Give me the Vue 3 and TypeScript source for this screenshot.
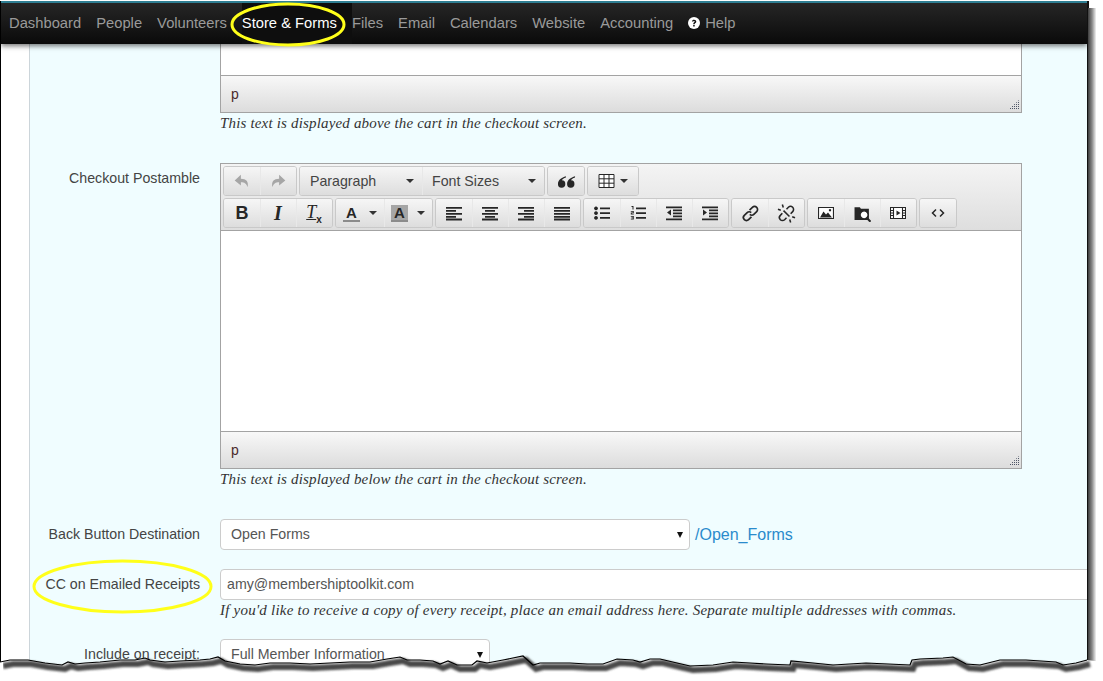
<script setup lang="ts">
interface Part { d: string; f?: string; s?: string; w?: number }
interface Btn { w?: number; icon?: string; text?: string; textClass?: string; caret?: boolean; label?: string }
type Group = Btn[]

const k = '#262626'
const lines = (spec: number[][]) => spec.map(([x, y, w]) => `M${x} ${y}h${w}v1.8H${x}z`).join('')
const icons: Record<string, Part[]> = {
  undo: [{ d: 'M7 2.500 1.500 7.500 7 12V9c3.200 0 5 1.200 6 4.500C14 8.500 11.800 6 7 6z', f: '#a6a6a6' }],
  redo: [{ d: 'M9 2.500l5.500 5L9 12V9c-3.200 0-5 1.200-6 4.500C2 8.500 4.200 6 9 6z', f: '#a6a6a6' }],
  quote: [{ d: 'M7.500 3.500C4 4.600 .8 6.600 .8 10a3.100 3.100 0 1 0 3.300-3c.4-.8 1.600-1.700 3.400-2.300zM15.200 3.500C11.700 4.600 8.500 6.600 8.500 10a3.100 3.100 0 1 0 3.300-3c.4-.8 1.600-1.700 3.400-2.300z', f: k }],
  table: [{ d: 'M.5 1.500h15v13H.5zM.5 5.800h15M.5 10.200h15M5.500 1.500v13M10.500 1.500v13', s: k, w: 1, f: '#fff' }],
  left: [{ d: lines([[0, 2, 16], [0, 5, 10], [0, 8, 16], [0, 11, 10], [0, 13.600, 16]]), f: k }],
  center: [{ d: lines([[0, 2, 16], [3, 5, 10], [0, 8, 16], [3, 11, 10], [0, 13.600, 16]]), f: k }],
  right: [{ d: lines([[0, 2, 16], [6, 5, 10], [0, 8, 16], [6, 11, 10], [0, 13.600, 16]]), f: k }],
  justify: [{ d: lines([[0, 2, 16], [0, 5, 16], [0, 8, 16], [0, 11, 16], [0, 13.600, 16]]), f: k }],
  bullist: [{ d: lines([[6, 2.500, 10], [6, 7.200, 10], [6, 12, 10]]) + 'M2 1.500a1.900 1.900 0 1 0 .01 0zM2 6.200a1.900 1.900 0 1 0 .01 0zM2 11a1.900 1.900 0 1 0 .01 0z', f: k }],
  numlist: [{ d: lines([[6, 2.500, 10], [6, 7.200, 10], [6, 12, 10]]) + 'M1.500 1h2v3.500h-1V2h-1zM.8 6h3v2h-2v.6h2v.8h-3v-2h2v-.6h-2zM.8 11h3v3.600h-3v-.8h2v-.6H1.300v-.7h1.500v-.7h-2z', f: k }],
  outdent: [{ d: lines([[0, 1.500, 16], [7, 4.500, 9], [7, 7.500, 9], [7, 10.500, 9], [0, 13.500, 16]]) + 'M5 4.500v6l-4-3z', f: k }],
  indent: [{ d: lines([[0, 1.500, 16], [7, 4.500, 9], [7, 7.500, 9], [7, 10.500, 9], [0, 13.500, 16]]) + 'M1 4.500v6l4-3z', f: k }],
  link: [{ d: 'M7.200 5.200 9.600 2.800a2.400 2.400 0 0 1 3.600 3.600L10.800 8.800a2.400 2.400 0 0 1-3.400 0M8.800 10.800 6.400 13.200a2.400 2.400 0 0 1-3.600-3.600L5.200 7.200a2.400 2.400 0 0 1 3.400 0', s: k, w: 1.400, f: 'none' }],
  unlink: [{ d: 'M8 4.400 9.600 2.800a2.400 2.400 0 0 1 3.600 3.600L11.500 8.200M8 11.600 6.400 13.200a2.400 2.400 0 0 1-3.600-3.600L4.500 7.800M5.500 5.600 10.500 10.500M4.500 .5l.8 2.400M.8 4.500l2.400.8M11.500 15.500l-.8-2.400M15.200 11.500l-2.400-.8', s: k, w: 1.300, f: 'none' }],
  image: [
    { d: 'M.5 2.500h15v11H.5z', s: k, w: 1.200, f: '#fff' },
    { d: 'M2 12.500l3.500-6 2.500 3 2-2 4 5zM12 4a1.200 1.200 0 1 0 .01 0z', f: k },
  ],
  browse: [
    { d: 'M.5 2h5l1 1.500h7.500V14H.5z', f: k },
    { d: 'M9.500 5.500a3.800 3.800 0 1 0 .01 0z', f: '#fff', s: k, w: 1.300 },
    { d: 'M12 12 15.500 15.800', s: k, w: 1.900, f: 'none' },
  ],
  media: [
    { d: 'M.5 2.500h15v11H.5zM3.500 2.500v11M12.500 2.500v11M.5 5.500h3M.5 8h3M.5 10.500h3M12.500 5.500h3M12.500 8h3M12.500 10.500h3', s: k, w: 1.100, f: '#fff' },
    { d: 'M6.500 5.500v5l4-2.500z', f: k },
  ],
  code: [{ d: 'M6 4.500 2.500 8 6 11.500M10 4.500 13.500 8 10 11.500', s: k, w: 1.500, f: 'none' }],
}

const row1: Group[] = [
  [{ icon: 'undo' }, { icon: 'redo' }],
  [{ w: 122, label: 'Paragraph', caret: true }, { w: 122, label: 'Font Sizes', caret: true }],
  [{ icon: 'quote' }],
  [{ w: 50, icon: 'table', caret: true }],
]
const row2: Group[] = [
  [{ text: 'B', textClass: 'bold' }, { text: 'I', textClass: 'ital' }, { text: 'Tx', textClass: 'clear' }],
  [{ w: 48, text: 'A', textClass: 'fore', caret: true }, { w: 48, text: 'A', textClass: 'back', caret: true }],
  [{ icon: 'left' }, { icon: 'center' }, { icon: 'right' }, { icon: 'justify' }],
  [{ icon: 'bullist' }, { icon: 'numlist' }, { icon: 'outdent' }, { icon: 'indent' }],
  [{ icon: 'link' }, { icon: 'unlink' }],
  [{ icon: 'image' }, { icon: 'browse' }, { icon: 'media' }],
  [{ icon: 'code' }],
]
const toolbar = [row1, row2]

const navItems = ['Dashboard', 'People', 'Volunteers', 'Store & Forms', 'Files', 'Email', 'Calendars', 'Website', 'Accounting']

const edge = '0,662 10,660 20,660 28,660 45,663 62,665 68,662 75,664 85,663 100,662 120,660 135,660 145,658 150,660 165,662 180,661 200,660 210,659 218,657 225,661 240,664 255,665 270,663 290,663 310,664 330,663 350,662 370,662 387,659 400,657 407,660 420,660 433,661 440,664 448,661 457,665 472,665 477,661 487,663 503,660 523,656 533,665 540,663 570,663 587,664 603,664 617,659 633,660 640,662 650,659 660,659 677,663 690,666 713,665 733,662 750,663 766,664 790,665 791,661 813,663 833,665 866,663 910,665 912,660 920,659 943,658 953,657 966,664 980,665 1000,660 1026,660 1056,662 1063,665 1076,663 1087,660'
</script>

<template>
  <div class="page">
    <div class="frame">
      <nav class="navbar">
        <a
          v-for="item in navItems"
          :key="item"
          class="nav-link"
          :class="{ active: item === 'Store & Forms' }"
        >{{ item }}</a>
        <a class="nav-link help">
          <svg class="help-icon" viewBox="0 0 12 12" width="12" height="12">
            <circle cx="6" cy="6" r="6" fill="#fff" />
            <path d="M3.900 4.600C4 3.300 5 2.700 6.100 2.700c1.300 0 2.200.8 2.200 1.900 0 1.600-1.600 1.500-1.600 2.700H5.200c0-1.900 1.500-1.800 1.500-2.700 0-.4-.3-.7-.7-.7-.5 0-.7.300-.8.700zM5.200 8h1.500v1.400H5.200z" fill="#111" />
          </svg>
          Help
        </a>
      </nav>

      <main class="panel">
        <section class="row first">
          <div class="label"></div>
          <div class="field">
            <div class="editor cut">
              <div class="edit-area short"></div>
              <div class="status"><span>p</span><i class="grip"></i></div>
            </div>
            <p class="hint">This text is displayed above the cart in the checkout screen.</p>
          </div>
        </section>

        <section class="row second">
          <label class="label lbl-top">Checkout Postamble</label>
          <div class="field">
            <div class="editor">
              <div class="tools">
                <div v-for="(row, r) in toolbar" :key="r" class="tool-row">
                  <div v-for="(group, g) in row" :key="g" class="group">
                    <button
                      v-for="(btn, b) in group"
                      :key="b"
                      type="button"
                      class="btn"
                      :class="{ wide: btn.label }"
                      :style="{ width: (btn.w ?? 36) + 'px' }"
                    >
                      <span v-if="btn.label" class="btn-label">{{ btn.label }}</span>
                      <span v-if="btn.text" :class="btn.textClass">{{ btn.text === 'Tx' ? 'T' : btn.text }}<sub v-if="btn.text === 'Tx'">x</sub></span>
                      <svg v-if="btn.icon" class="ico" :class="'i-' + btn.icon" viewBox="0 0 16 16">
                        <path
                          v-for="(p, i) in icons[btn.icon]"
                          :key="i"
                          :d="p.d"
                          :fill="p.f"
                          :stroke="p.s"
                          :stroke-width="p.w"
                          fill-rule="evenodd"
                        />
                      </svg>
                      <i v-if="btn.caret" class="caret"></i>
                    </button>
                  </div>
                </div>
              </div>
              <div class="edit-area tall"></div>
              <div class="status"><span>p</span><i class="grip"></i></div>
            </div>
            <p class="hint">This text is displayed below the cart in the checkout screen.</p>
          </div>
        </section>

        <section class="row third">
          <label class="label lift">Back Button Destination</label>
          <div class="field inline">
            <div class="select-wrap dest">
              <select class="control"><option>Open Forms</option></select>
            </div>
            <a class="path">/Open_Forms</a>
          </div>
        </section>

        <section class="row fourth">
          <label class="label">CC on Emailed Receipts</label>
          <div class="field">
            <input class="control email" value="amy@membershiptoolkit.com" />
            <p class="hint long">If you'd like to receive a copy of every receipt, place an email address here. Separate multiple addresses with commas.</p>
          </div>
        </section>

        <section class="row">
          <label class="label lift">Include on receipt:</label>
          <div class="field">
            <div class="select-wrap info">
              <select class="control"><option>Full Member Information</option></select>
            </div>
          </div>
        </section>
      </main>
    </div>

    <svg class="overlay" viewBox="0 0 1103 681" width="1103" height="681" aria-hidden="true">
      <defs>
        <filter id="soft" filterUnits="userSpaceOnUse" x="0" y="640" width="1103" height="41"><feGaussianBlur stdDeviation="1.200" /></filter>
        <linearGradient id="side" x1="0" x2="1" y1="0" y2="0">
          <stop offset="0" stop-color="#3c3c3c" />
          <stop offset="0.5" stop-color="#888" />
          <stop offset="1" stop-color="#f2f2f2" />
        </linearGradient>
      </defs>
      <rect x="1088" y="8" width="8" height="657" fill="url(#side)" />
      <polygon :points="edge + ' 1103,662 1103,681 0,681'" fill="#fff" />
      <polyline :points="edge" transform="translate(3 4)" fill="none" stroke="#484848" stroke-width="6" filter="url(#soft)" />
      <polyline :points="edge" fill="none" stroke="#000" stroke-width="1.200" />
      <ellipse cx="288" cy="24.500" rx="56" ry="20.500" fill="none" stroke="#ffff1a" stroke-width="3" />
      <ellipse cx="122.500" cy="586.500" rx="88.500" ry="25.500" fill="none" stroke="#ffff1a" stroke-width="3" />
    </svg>
  </div>
</template>

<style scoped>
.page {
  position: relative;
  width: 1103px;
  height: 681px;
  overflow: hidden;
  background: #fff;
  font-family: "Liberation Sans", Arial, sans-serif;
}
.frame {
  box-sizing: border-box;
  width: 1089px;
  height: 680px;
  margin-top: 1px;
  border-left: 1px solid #000;
  border-right: 2px solid #111;
  overflow: hidden;
  display: flex;
  flex-direction: column;
  background: #fff;
}
.navbar {
  position: relative;
  z-index: 2;
  flex: none;
  box-sizing: border-box;
  height: 43px;
  display: flex;
  align-items: center;
  padding: 0 0 0 0.5px;
  border-top: 2px solid #2f7f93;
  background: linear-gradient(#262626, #0a0a0a);
  box-shadow: 0 2px 5px rgba(0, 0, 0, 0.55);
}
.nav-link {
  display: flex;
  align-items: center;
  box-sizing: border-box;
  height: 100%;
  padding: 0 7.5px 1px;
  font-size: 14.75px;
  color: #9a9a9a;
  white-space: nowrap;
}
.nav-link.active {
  margin-left: 7.5px;
  margin-right: -7.5px;
  padding: 0 15px 1px 0;
  color: #fff;
  background: #0e0e0e;
}
.help { gap: 5px; }
.help-icon { flex: none; }
.panel {
  flex: 1;
  margin-left: 28px;
  border-left: 1px solid #ccd5da;
  background: #f0fdff;
}
.row {
  display: grid;
  grid-template-columns: 170px 1fr;
  column-gap: 20px;
  align-items: center;
}
.first { margin-bottom: 30px; }
.second { align-items: start; margin-bottom: 30px; }
.third { margin-bottom: 19px; }
.fourth { align-items: start; margin-bottom: 19px; }
.fourth .label { line-height: 30px; }
.label {
  text-align: right;
  font-size: 14.2px;
  color: #444;
}
.lift { padding-bottom: 2px; }
.lbl-top { padding-top: 7px; }
.field { min-width: 0; }
.editor {
  box-sizing: border-box;
  width: 802px;
  border: 1px solid #a3a3a3;
}
.editor.cut { border-top: 0; }
.tools {
  padding: 2px;
  display: flex;
  flex-direction: column;
  gap: 2px;
  border-bottom: 1px solid #a3a3a3;
  background: linear-gradient(#f4f4f4, #dedede);
}
.tool-row { display: flex; gap: 2px; height: 30px; }
.group {
  display: flex;
  border: 1px solid #c9c9c9;
  border-radius: 3px;
  overflow: hidden;
}
.btn {
  display: flex;
  align-items: center;
  justify-content: center;
  gap: 9px;
  padding: 0;
  border: 0;
  color: #262626;
  background: linear-gradient(#f6f6f6, #dddddd);
  font-family: "Liberation Sans", Arial, sans-serif;
  font-size: 14px;
}
.btn + .btn { box-shadow: inset 1px 0 0 #e8e8e8; }
.btn.wide {
  justify-content: space-between;
  padding: 0 8px 0 10px;
  box-sizing: border-box;
  font-size: 14.2px;
}
.btn-label { color: #444; }
.ico { width: 16px; height: 16px; display: block; }
.i-undo, .i-redo { width: 18px; height: 18px; }
.i-quote { width: 19px; height: 19px; }
.i-link, .i-unlink { width: 19px; height: 19px; }
.i-browse { width: 17px; height: 17px; }
.i-table { width: 17px; height: 16px; margin-right: -4px; }
.caret {
  display: block;
  border: 4px solid transparent;
  border-top-color: #333;
  border-bottom-width: 0;
}
.bold { font-weight: 700; font-size: 18px; font-family: "Liberation Sans", sans-serif; }
.ital { font-style: italic; font-weight: 700; font-size: 20px; font-family: "Liberation Serif", serif; }
.clear { font-style: italic; font-size: 18px; font-family: "Liberation Serif", serif; text-decoration: underline; }
.clear sub { font-size: 10px; font-style: normal; font-weight: 700; font-family: "Liberation Sans", sans-serif; }
.fore,
.back {
  box-sizing: border-box;
  width: 17px;
  height: 17px;
  line-height: 15px;
  font-weight: 700;
  font-size: 15px;
  text-align: center;
  border-bottom: 2px solid #8b8b8b;
}
.back { background: #a6a6a6; }
.edit-area { background: #fff; border-bottom: 1px solid #a3a3a3; }
.edit-area.short { height: 31px; }
.edit-area.tall { height: 200px; }
.status {
  position: relative;
  box-sizing: border-box;
  height: 36px;
  padding: 9px 10px;
  font-size: 14px;
  line-height: 18px;
  color: #4a2a2a;
  background: linear-gradient(#f8f8f8, #dcdcdc);
}
.grip {
  position: absolute;
  right: 2px;
  bottom: 3px;
  width: 10px;
  height: 9px;
  background-image: conic-gradient(#4d5566 25%, transparent 0);
  background-size: 2px 2px;
  clip-path: polygon(100% 0, 100% 100%, 0 100%);
}
.hint {
  margin: 0;
  height: 20px;
  line-height: 20px;
  font-family: "Liberation Serif", "Times New Roman", serif;
  font-style: italic;
  font-size: 15px;
  letter-spacing: 0.17px;
  color: #333;
  white-space: nowrap;
}
.hint.long { letter-spacing: 0.22px; }
.control {
  box-sizing: border-box;
  height: 31px;
  padding: 0 10px 2px;
  border: 1px solid #ccc;
  border-radius: 4px;
  background: #fff;
  font-family: "Liberation Sans", Arial, sans-serif;
  font-size: 14.2px;
  color: #555;
  appearance: none;
  outline: none;
}
.select-wrap { position: relative; }
.select-wrap .control { width: 100%; display: block; }
.select-wrap::after {
  content: "";
  position: absolute;
  right: 7px;
  top: 13px;
  border: 3.5px solid transparent;
  border-top: 6px solid #111;
  border-bottom: 0;
}
.dest { width: 470px; flex: none; }
.info { width: 270px; }
.inline { display: flex; align-items: center; gap: 5px; }
.path { font-size: 16px; color: #2a8bcc; }
.email { width: 900px; padding: 0 6px 2px; }
.overlay {
  position: absolute;
  left: 0;
  top: 0;
  z-index: 3;
  pointer-events: none;
}
</style>

<style>
html, body { margin: 0; background: #fff; }
</style>
